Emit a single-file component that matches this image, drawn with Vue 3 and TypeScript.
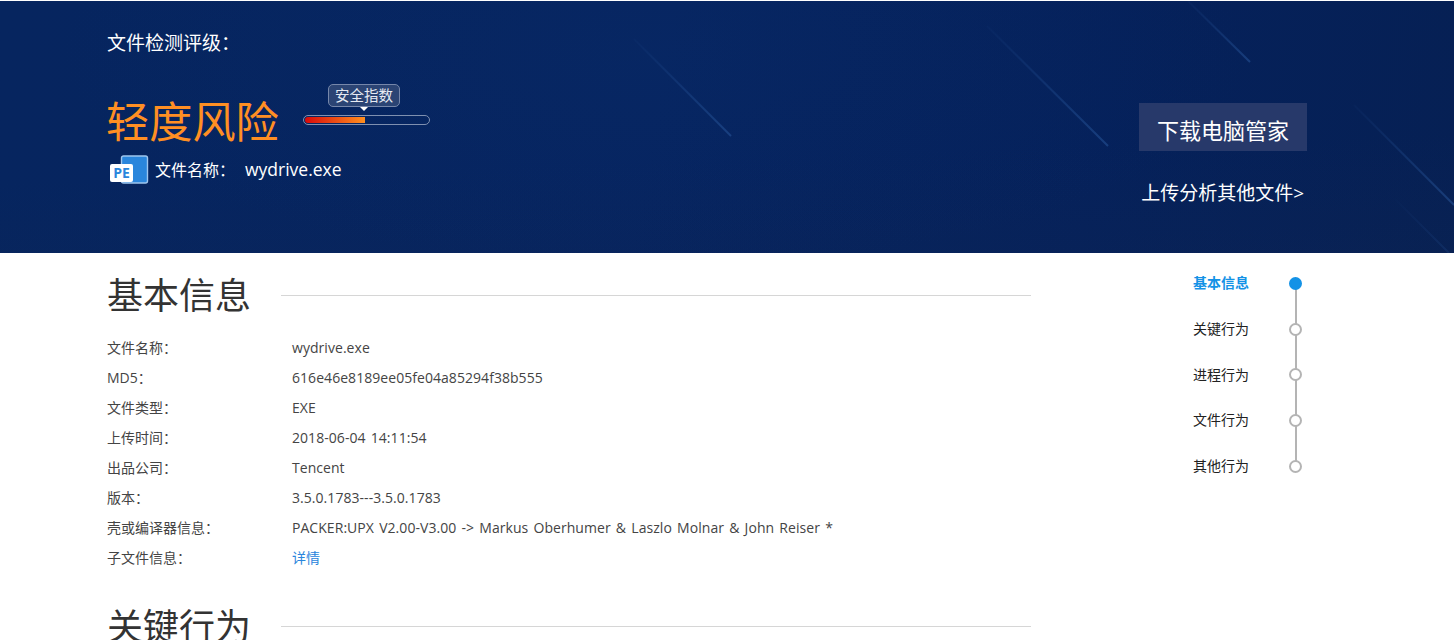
<script setup lang="ts">
interface InfoRow {
  label: string
  value: string
  link?: boolean
}

const rows: InfoRow[] = [
  { label: '文件名称：', value: 'wydrive.exe' },
  { label: 'MD5：', value: '616e46e8189ee05fe04a85294f38b555' },
  { label: '文件类型：', value: 'EXE' },
  { label: '上传时间：', value: '2018-06-04 14:11:54' },
  { label: '出品公司：', value: 'Tencent' },
  { label: '版本：', value: '3.5.0.1783---3.5.0.1783' },
  { label: '壳或编译器信息：', value: 'PACKER:UPX V2.00-V3.00 -> Markus Oberhumer & Laszlo Molnar & John Reiser *' },
  { label: '子文件信息：', value: '详情', link: true },
]

const navItems = ['基本信息', '关键行为', '进程行为', '文件行为', '其他行为']
</script>

<template>
  <div class="page">
    <header class="hero">
      <svg class="streaks" viewBox="0 0 1454 252" preserveAspectRatio="none" aria-hidden="true">
        <defs>
          <linearGradient id="streak" x1="0" y1="0" x2="1" y2="1">
            <stop offset="0" stop-color="#2a5aa0" stop-opacity="0.05" />
            <stop offset="1" stop-color="#2a5aa0" stop-opacity="0.5" />
          </linearGradient>
        </defs>
        <line x1="1188" y1="0" x2="1250" y2="61" stroke="url(#streak)" />
        <line x1="987" y1="25" x2="1108" y2="145" stroke="url(#streak)" />
        <line x1="634" y1="38" x2="731" y2="135" stroke="url(#streak)" />
        <line x1="1354" y1="104" x2="1454" y2="204" stroke="url(#streak)" />
        <line x1="1395" y1="198" x2="1449" y2="252" stroke="url(#streak)" opacity="0.4" />
      </svg>
      <div class="hero-left">
        <div class="grade-title">文件检测评级：</div>
        <div class="risk-row">
          <div class="risk">轻度风险</div>
          <div class="gauge">
            <div class="gauge-tag">安全指数</div>
            <div class="gauge-bar"><div class="gauge-fill"></div></div>
          </div>
        </div>
        <div class="file-row">
          <svg class="pe-icon" width="40" height="30" viewBox="0 0 40 30" aria-hidden="true">
            <rect x="12.5" y="1" width="26" height="27" rx="2" fill="#2a86dc" stroke="#9fc6ee" stroke-width="1.4" />
            <rect x="1" y="9" width="23" height="18" rx="2" fill="#fff" />
            <text x="12.5" y="23" text-anchor="middle" class="pe-text">PE</text>
          </svg>
          <span class="file-label">文件名称：</span>
          <span class="file-name">wydrive.exe</span>
        </div>
      </div>
      <div class="hero-right">
        <a class="download">下载电脑管家</a>
        <a class="upload">上传分析其他文件&gt;</a>
      </div>
    </header>

    <div class="body">
      <main class="content">
        <section class="section">
          <div class="section-head">
            <h2>基本信息</h2>
            <span class="rule"></span>
          </div>
          <div class="rows">
            <div v-for="row in rows" :key="row.label" class="row">
              <span class="label">{{ row.label }}</span>
              <span class="value" :class="{ link: row.link }">{{ row.value }}</span>
            </div>
          </div>
        </section>
        <section class="section second">
          <div class="section-head">
            <h2>关键行为</h2>
            <span class="rule"></span>
          </div>
        </section>
      </main>
      <nav class="side-nav">
        <div v-for="(item, i) in navItems" :key="item" class="nav-item" :class="{ active: i === 0 }">
          <span class="nav-text">{{ item }}</span>
          <span class="nav-dot"></span>
        </div>
      </nav>
    </div>
  </div>
</template>

<style>
html, body { margin: 0; background: #fff; overflow: hidden; }
</style>

<style scoped>
.page {
  height: 640px;
  overflow: hidden;
  font-family: "Open Sans", "Noto Sans CJK SC", sans-serif;
  background: #fff;
}
.hero {
  position: relative;
  box-sizing: border-box;
  height: 252px;
  margin-top: 1px;
  padding: 0 147px 0 107px;
  display: flex;
  justify-content: space-between;
  color: #fff;
  background:
    radial-gradient(ellipse 600px 220px at 45% 20%, rgba(16, 58, 120, 0.12), rgba(16, 58, 120, 0) 100%),
    linear-gradient(178deg, rgba(0, 0, 0, 0) 60%, rgba(20, 40, 80, 0.2) 100%),
    linear-gradient(100deg, #06255f 0%, #062460 45%, #05215b 75%, #062054 100%);
  overflow: hidden;
}
.streaks { position: absolute; inset: 0; width: 100%; height: 100%; }
.streaks line { stroke-width: 2; }
.hero-left, .hero-right { position: relative; }
.grade-title { font-size: 19px; line-height: 24px; margin-top: 30px; }
.risk-row { display: flex; align-items: flex-start; margin-top: 29px; }
.risk { width: 196px; flex: none; font-size: 43.2px; line-height: 60px; color: #ff8f23; margin-top: 8px; margin-left: -1px; margin-right: 1px; }
.gauge { width: 127px; display: flex; flex-direction: column; align-items: center; }
.gauge-tag {
  position: relative;
  box-sizing: border-box;
  width: 72px;
  height: 23px;
  margin-right: 5px;
  line-height: 21px;
  font-size: 14.5px;
  text-align: center;
  color: #e6eaf2;
  background: #2b4474;
  border: 1px solid #7687aa;
  border-radius: 5px;
}
.gauge-tag::after {
  content: "";
  position: absolute;
  left: 50%;
  bottom: -5px;
  margin-left: -4px;
  border-left: 4px solid transparent;
  border-right: 4px solid transparent;
  border-top: 4px solid #fff;
}
.gauge-bar {
  box-sizing: border-box;
  width: 127px;
  height: 10px;
  margin-top: 8px;
  padding: 1px;
  border: 1px solid #7f90b0;
  border-radius: 5px;
}
.gauge-fill {
  width: 60px;
  height: 6px;
  border-radius: 3px 0 0 3px;
  background: linear-gradient(90deg, #d90a0a, #ff8f1f);
}
.file-row { display: flex; align-items: center; margin-top: 2px; height: 30px; }
.pe-icon { margin: 2px 6px 0 2px; flex: none; }
.pe-text { font: 700 14px "Open Sans", sans-serif; fill: #2a86dc; }
.file-label { font-size: 16px; }
.file-name { font-size: 17.5px; margin-left: 10px; }
.hero-right { display: flex; flex-direction: column; align-items: flex-end; }
.download {
  width: 168px;
  height: 48px;
  margin-top: 102px;
  font-size: 22px;
  line-height: 55px;
  text-align: center;
  background: #27396a;
}
.upload { font-size: 19px; line-height: 30px; margin-top: 27px; margin-right: 3px; }
.body { display: flex; padding-left: 107px; }
.content { width: 924px; flex: none; }
.section-head { display: flex; align-items: center; height: 86px; }
.section-head h2 {
  margin: 0;
  font-size: 36px;
  font-weight: 400;
  line-height: 50px;
  color: #333;
}
.rule { flex: 1; height: 1px; background: #d6d6d6; margin-left: 30px; margin-bottom: 2px; }
.rows { margin-top: -6px; }
.row { display: flex; height: 30px; line-height: 30px; font-size: 14px; color: #444; }
.label { width: 185px; flex: none; }
.value { letter-spacing: 0.05px; word-spacing: 1.5px; }
.link { color: #2a86dc; }
.second { margin-top: 11px; }
.side-nav { margin-left: 162px; padding-top: 7.5px; position: relative; }
.nav-item {
  position: relative;
  display: flex;
  align-items: center;
  width: 116px;
  height: 45.7px;
  font-size: 14px;
  color: #222;
}
.nav-item:not(:last-child)::after {
  content: "";
  position: absolute;
  left: 102px;
  top: 50%;
  width: 2px;
  height: 45.7px;
  background: #b4b4b4;
}
.nav-text { width: 102px; flex: none; line-height: 20px; }
.nav-dot {
  position: relative;
  z-index: 1;
  box-sizing: border-box;
  width: 13px;
  height: 13px;
  margin-left: -6px;
  border: 2px solid #b4b4b4;
  border-radius: 50%;
  background: #fff;
}
.active { color: #1492e6; font-weight: 700; }
.active .nav-dot { background: #1492e6; border-color: #1492e6; }
</style>
